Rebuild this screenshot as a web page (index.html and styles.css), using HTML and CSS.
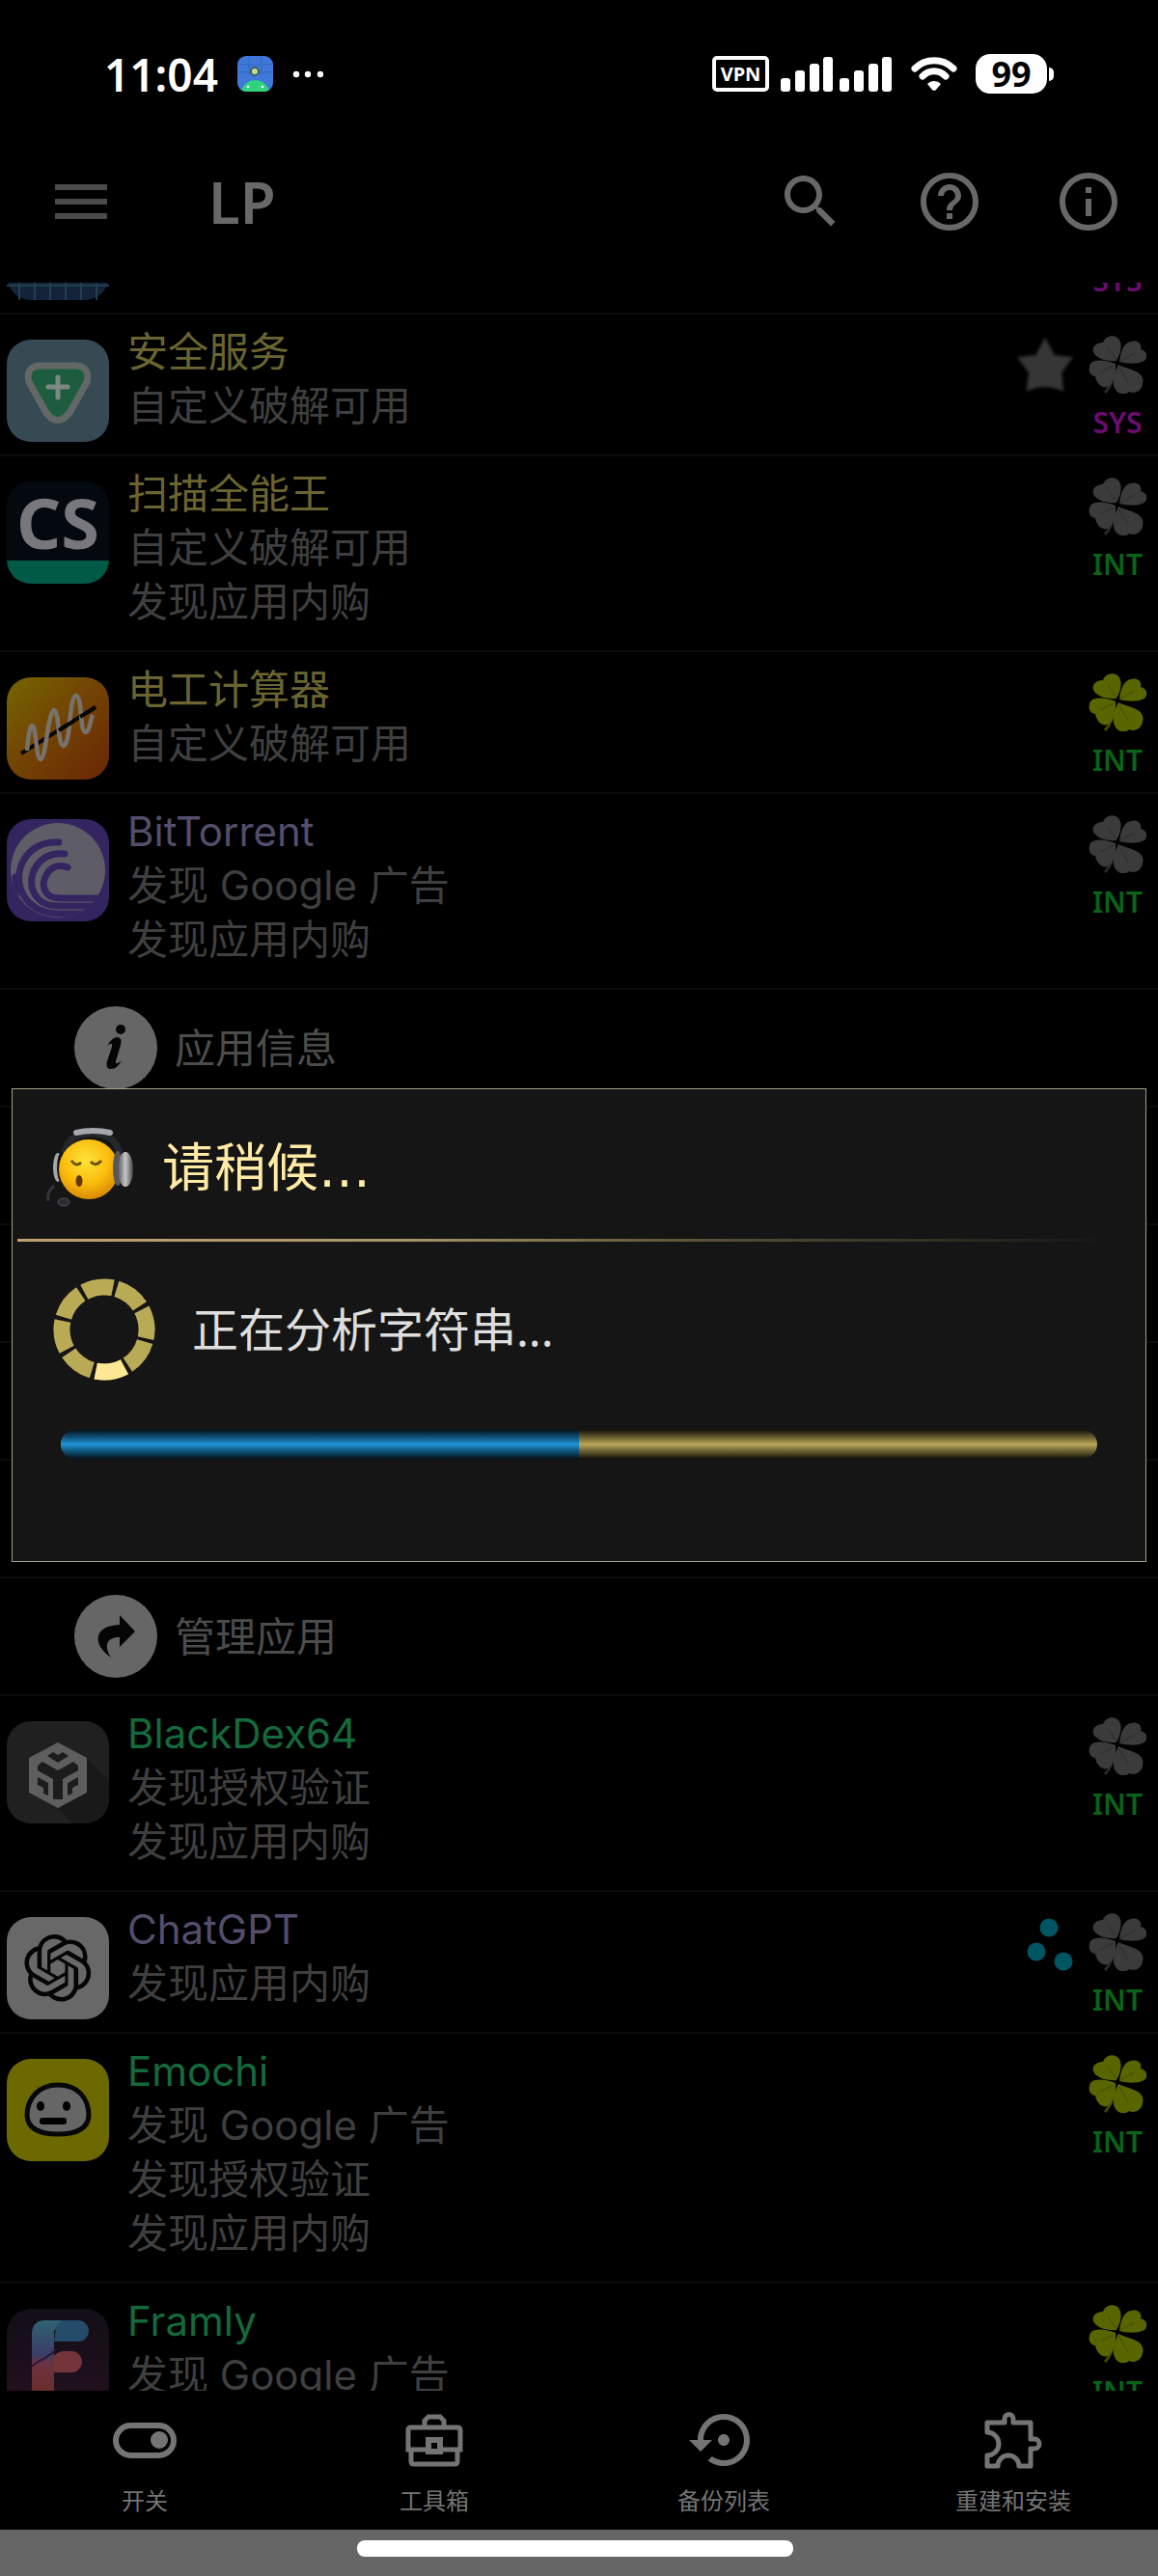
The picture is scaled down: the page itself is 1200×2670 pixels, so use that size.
FILE: index.html
```html
<!DOCTYPE html>
<html lang="zh-CN">
<head>
<meta charset="utf-8">
<meta name="viewport" content="width=device-width, initial-scale=1">
<title>LP</title>
<link rel="stylesheet" href="styles.css">
</head>
<body>
<svg class="defs" aria-hidden="true">
  <symbol id="clover" viewBox="0 0 60 60">
    <path d="M26 34C26 45 22 54 17 59" fill="none" stroke="currentColor" stroke-width="3" opacity=".7"/>
    <g fill="currentColor">
      <path d="M29 26C20 27 8 24 5 17C3 10 10 7 15 7C17 0 27-2 31 3C36 9 33 19 29 26Z"/>
      <path d="M32 27C33 18 36 7 44 6C50 4 56 8 54 14C61 16 62 22 58 26C50 30 40 29 32 27Z"/>
      <path d="M28 29C18 25 6 24 2 29C-1 35 1 41 7 42C8 49 14 55 20 53C26 49 29 39 28 29Z"/>
      <path d="M31 30C27 38 24 48 27 54C30 61 38 62 42 58C48 61 55 57 56 50C58 44 54 39 49 37C43 34 37 33 31 30Z"/>
    </g>
    <path d="M29 25L20 12M33 26L48 18M26 31L12 38M32 33L41 49" fill="none" stroke="#000" stroke-opacity=".12" stroke-width="2"/>
  </symbol>
</svg>
<div class="screen">
  <header class="status">
    <span class="clock">11:04</span>
    <svg class="notice" width="37" height="37" viewBox="0 0 37 37"><defs><clipPath id="nc"><rect width="37" height="37" rx="9"/></clipPath></defs><g clip-path="url(#nc)"><rect width="37" height="37" fill="#3f78d8"/><path d="M0 9H37M0 17H37M12 0V20M25 0V20" stroke="#3569c0"/><circle cx="18" cy="16" r="5" fill="#3b5f6c"/><circle cx="18" cy="16" r="3" fill="#c9dc8b"/><path d="M3 40C6 20 31 20 34 40Z" fill="#31d27e"/><circle cx="11" cy="32" r="1.300" fill="#fff"/><circle cx="26" cy="32" r="1.300" fill="#fff"/></g></svg>
    <svg class="more" width="32" height="8" viewBox="0 0 32 8" fill="#fff"><circle cx="4" cy="4" r="3.200"/><circle cx="16" cy="4" r="3.200"/><circle cx="29" cy="4" r="3.200"/></svg>
    <span class="vpn">VPN</span>
    <svg width="115" height="37" viewBox="0 0 115 37" fill="#fff"><rect y="23" width="10" height="14" rx="3"/><rect x="15" y="15" width="10" height="22" rx="3"/><rect x="30" y="8" width="10" height="29" rx="3"/><rect x="44" y="1" width="10" height="36" rx="3"/><rect x="61" y="23" width="10" height="14" rx="3"/><rect x="76" y="15" width="10" height="22" rx="3"/><rect x="91" y="8" width="10" height="29" rx="3"/><rect x="105" y="1" width="10" height="36" rx="3"/></svg>
    <svg class="wifi" width="48" height="37" viewBox="0 0 48 37"><path d="M4 13C15 2 33 2 44 13M12 21C19 14 29 14 36 21" fill="none" stroke="#fff" stroke-width="7" stroke-linecap="round"/><path d="M17 29C21 25 27 25 31 29L26 35Q24 37 22 35Z" fill="#fff"/></svg>
    <span class="battery">99</span><span class="nub"></span>
  </header>

  <div class="appbar">
    <button class="icon-btn dimmer" aria-label="菜单"><svg viewBox="0 0 24 24"><path d="M3 18h18v-2H3v2zm0-5h18v-2H3v2zm0-7v2h18V6H3z"/></svg></button>
    <h1>LP</h1>
    <div class="actions">
      <button class="icon-btn" aria-label="搜索"><svg viewBox="0 0 24 24"><path d="M15.500 14h-.79l-.28-.27C15.410 12.590 16 11.110 16 9.500 16 5.910 13.090 3 9.500 3S3 5.910 3 9.500 5.910 16 9.500 16c1.610 0 3.090-.59 4.230-1.570l.27.28v.79l5 4.990L20.490 19l-4.990-5zm-6 0C7.010 14 5 11.990 5 9.500S7.010 5 9.500 5 14 7.010 14 9.500 11.990 14 9.500 14z"/></svg></button>
      <button class="icon-btn" aria-label="帮助"><svg viewBox="0 0 24 24"><path d="M11 18h2v-2h-2v2zm1-16C6.480 2 2 6.480 2 12s4.480 10 10 10 10-4.480 10-10S17.520 2 12 2zm0 18c-4.410 0-8-3.590-8-8s3.590-8 8-8 8 3.590 8 8-3.590 8-8 8zm0-14c-2.210 0-4 1.790-4 4h2c0-1.100.9-2 2-2s2 .9 2 2c0 2-3 1.750-3 5h2c0-2.250 3-2.500 3-5 0-2.210-1.790-4-4-4z"/></svg></button>
      <button class="icon-btn" aria-label="关于"><svg viewBox="0 0 24 24"><path d="M11 7h2v2h-2zm0 4h2v6h-2zm1-9C6.480 2 2 6.480 2 12s4.480 10 10 10 10-4.480 10-10S17.520 2 12 2zm0 18c-4.410 0-8-3.590-8-8s3.590-8 8-8 8 3.590 8 8-3.590 8-8 8z"/></svg></button>
    </div>
  </div>

  <main class="list-view">
    <ul class="apps">
      <li class="app scrolled">
        <svg class="logo" viewBox="0 0 106 106"><rect width="106" height="106" rx="25" fill="#12233a"/><path d="M0 91H106M13 0V106M29 0V106M45 0V106M61 0V106M77 0V106M93 0V106" stroke="#223f50" stroke-width="2"/></svg>
        <div class="info"></div>
        <div class="side"><svg class="mark"></svg><span class="tag sys">SYS</span></div>
      </li>
      <li class="app">
        <svg class="logo" viewBox="0 0 106 106"><rect width="106" height="106" rx="25" fill="#364a54"/><path d="M35 27H71Q87 28 83 44L65 76Q53 91 41 76L23 44Q19 28 35 27Z" fill="#1e5c40" stroke="#626866" stroke-width="7"/><path d="M53 39V60M43 49H63" stroke="#7c8882" stroke-width="5" stroke-linecap="round"/></svg>
        <div class="info"><h2 class="yellow">安全服务</h2><p>自定义破解可用</p></div>
        <svg class="mark star" viewBox="0 0 60 60"><path d="M31 4L40 21L58 23L47 38L49 56Q31 48 13 56L15 38L4 23L22 21Z" fill="#363636" stroke="#1d1d1d" stroke-width="4" stroke-linejoin="round" paint-order="stroke"/></svg>
        <div class="side"><svg class="mark grey"><use href="#clover"/></svg><span class="tag sys">SYS</span></div>
      </li>
      <li class="app">
        <svg class="logo" viewBox="0 0 106 106"><defs><clipPath id="cs"><rect width="106" height="106" rx="25"/></clipPath></defs><g clip-path="url(#cs)"><rect width="106" height="106" fill="#040910"/><rect y="82" width="106" height="24" fill="#005a46"/></g><text x="53" y="70" text-anchor="middle" class="logo-text">CS</text></svg>
        <div class="info"><h2 class="yellow">扫描全能王</h2><p>自定义破解可用</p><p>发现应用内购</p></div>
        <div class="side"><svg class="mark grey"><use href="#clover"/></svg><span class="tag">INT</span></div>
      </li>
      <li class="app">
        <svg class="logo" viewBox="0 0 106 106"><defs><linearGradient id="og" x1="0" y1="0" x2="1" y2="1"><stop stop-color="#746600"/><stop offset=".5" stop-color="#724204"/><stop offset="1" stop-color="#6a2605"/></linearGradient></defs><rect width="106" height="106" rx="25" fill="url(#og)"/><path d="M15 79L92 31" stroke="#080604" stroke-width="4"/><path d="M21 76C23 54 25 46 28 52C31 64 31 84 35 85C41 84 42 38 49 34C55 36 52 70 59 71C67 68 64 19 72 19C79 22 75 57 82 57C86 56 86 46 89 39" fill="none" stroke="#77736c" stroke-width="4.500"/><path d="M54 55L70 45M76 41L92 31" stroke="#080604" stroke-width="4"/></svg>
        <div class="info"><h2 class="yellow">电工计算器</h2><p>自定义破解可用</p></div>
        <div class="side"><svg class="mark lime"><use href="#clover"/></svg><span class="tag">INT</span></div>
      </li>
      <li class="app">
        <svg class="logo" viewBox="0 0 106 106"><defs><clipPath id="bt"><circle cx="53" cy="53" r="49"/></clipPath></defs><rect width="106" height="106" rx="25" fill="#342560"/><circle cx="53" cy="53" r="49" fill="#5e5c66"/><g clip-path="url(#bt)" fill="none" stroke="#342560" stroke-width="7" stroke-linecap="round"><path d="M54 24C24 22 8 48 14 71C20 91 38 98 55 98H90"/><path d="M60 36C32 33 20 60 28 76C34 88 44 90 54 90H104"/><path d="M63 50C44 43 34 64 40 75C44 81 49 82 56 82H104"/><path d="M9 60V90"/></g></svg>
        <div class="info"><h2 class="violet">BitTorrent</h2><p>发现 Google 广告</p><p>发现应用内购</p></div>
        <div class="side"><svg class="mark grey"><use href="#clover"/></svg><span class="tag">INT</span></div>
      </li>
      <li class="option">
        <svg viewBox="0 0 86 86"><circle cx="43" cy="43" r="43" fill="#666"/><ellipse cx="48" cy="24" rx="5" ry="5" fill="#050505"/><path d="M34 41Q39 32 45 32Q50 33 48 40L43 57Q42 62 49 56Q44 66 37 65Q32 64 34 57L39 42Q40 36 34 41Z" fill="#050505"/></svg><span>应用信息</span>
      </li>
      <li class="option"></li>
      <li class="option"></li>
      <li class="option"></li>
      <li class="option"></li>
      <li class="option">
        <svg viewBox="0 0 86 86"><circle cx="43" cy="43" r="43" fill="#666"/><path d="M47 21L63 38L47 54V44C34 44 30 52 38 65C18 51 20 32 47 31Z" fill="#050505"/></svg><span>管理应用</span>
      </li>
      <li class="app">
        <svg class="logo" viewBox="0 0 106 106"><rect width="106" height="106" rx="25" fill="#202020"/><path d="M53 90L83 38L106 62V81Q103 103 81 106H68Z" fill="#191919"/><path d="M53 22L83 38V74L53 90L23 74V38Z" fill="#5e5e5e"/><g fill="#1c1c1c"><path d="M42 36L48 32L53 35L58 32L64 36L53 43Z"/><path d="M32 46L37 42L53 51L69 42L74 46V51L58 60V81H48V60L32 51Z"/><path d="M32 58L43 64V77L38 75V69L32 66ZM74 58L63 64V77L68 75V69L74 66Z"/></g></svg>
        <div class="info"><h2 class="green">BlackDex64</h2><p>发现授权验证</p><p>发现应用内购</p></div>
        <div class="side"><svg class="mark grey"><use href="#clover"/></svg><span class="tag">INT</span></div>
      </li>
      <li class="app">
        <svg class="logo" viewBox="0 0 106 106"><rect width="106" height="106" rx="25" fill="#686868"/><g transform="translate(18 18) scale(2.900)"><path fill="#050505" d="M22.2819 9.8211a5.9847 5.9847 0 0 0-.5157-4.9108 6.0462 6.0462 0 0 0-6.5098-2.9A6.0651 6.0651 0 0 0 4.9807 4.1818a5.9847 5.9847 0 0 0-3.9977 2.9 6.0462 6.0462 0 0 0 .7427 7.0966 5.98 5.98 0 0 0 .511 4.9107 6.051 6.051 0 0 0 6.5146 2.9001A5.9847 5.9847 0 0 0 13.2599 24a6.0557 6.0557 0 0 0 5.7718-4.2058 5.9894 5.9894 0 0 0 3.9977-2.9001 6.0557 6.0557 0 0 0-.7475-7.0729zm-9.022 12.6081a4.4755 4.4755 0 0 1-2.8764-1.0408l.1419-.0804 4.7783-2.7582a.7948.7948 0 0 0 .3927-.6813v-6.7369l2.02 1.1686a.071.071 0 0 1 .038.052v5.5826a4.504 4.504 0 0 1-4.4945 4.4944zm-9.6607-4.1254a4.4708 4.4708 0 0 1-.5346-3.0137l.142.0852 4.783 2.7582a.7712.7712 0 0 0 .7806 0l5.8428-3.3685v2.3324a.0804.0804 0 0 1-.0332.0615L9.74 19.9502a4.4992 4.4992 0 0 1-6.1408-1.6464zM2.3408 7.8956a4.485 4.485 0 0 1 2.3655-1.9728V11.6a.7664.7664 0 0 0 .3879.6765l5.8144 3.3543-2.0201 1.1685a.0757.0757 0 0 1-.071 0l-4.8303-2.7865A4.504 4.504 0 0 1 2.3408 7.872zm16.5963 3.8558L13.1038 8.364 15.1192 7.2a.0757.0757 0 0 1 .071 0l4.8303 2.7913a4.4944 4.4944 0 0 1-.6765 8.1042v-5.6772a.79.79 0 0 0-.407-.667zm2.0107-3.0231l-.142-.0852-4.7735-2.7818a.7759.7759 0 0 0-.7854 0L9.409 9.2297V6.8974a.0662.0662 0 0 1 .0284-.0615l4.8303-2.7866a4.4992 4.4992 0 0 1 6.6802 4.66zM8.3065 12.863l-2.02-1.1638a.0804.0804 0 0 1-.038-.0567V6.0742a4.4992 4.4992 0 0 1 7.3757-3.4537l-.142.0805L8.704 5.459a.7948.7948 0 0 0-.3927.6813zm1.0976-2.3654l2.602-1.4998 2.6069 1.4998v2.9994l-2.5974 1.4997-2.6067-1.4997Z"/></g></svg>
        <div class="info"><h2 class="violet">ChatGPT</h2><p>发现应用内购</p></div>
        <svg class="mark" viewBox="0 0 60 60" fill="#005563"><circle cx="35" cy="15" r="9.500"/><circle cx="22" cy="40" r="9.500"/><circle cx="50" cy="50" r="9.500"/></svg>
        <div class="side"><svg class="mark grey"><use href="#clover"/></svg><span class="tag">INT</span></div>
      </li>
      <li class="app">
        <svg class="logo" viewBox="0 0 106 106"><rect width="106" height="106" rx="25" fill="#6c6900"/><path d="M53 27C73 27 85 40 85 59C84 73 71 78 53 78S22 73 21 59C21 40 34 27 53 27Z" fill="#666" stroke="#070707" stroke-width="5"/><ellipse cx="35" cy="49" rx="4" ry="5"/><ellipse cx="62" cy="49" rx="4" ry="5"/><rect x="34" y="61" width="28" height="7" rx="3"/></svg>
        <div class="info"><h2 class="green">Emochi</h2><p>发现 Google 广告</p><p>发现授权验证</p><p>发现应用内购</p></div>
        <div class="side"><svg class="mark lime"><use href="#clover"/></svg><span class="tag">INT</span></div>
      </li>
      <li class="app">
        <svg class="logo" viewBox="0 0 106 106"><defs><linearGradient id="fb" x1="0" y1="0" x2="0" y2="1"><stop stop-color="#120e18"/><stop offset="1" stop-color="#25101f"/></linearGradient><linearGradient id="fs" x1="0" y1="0" x2="0" y2="1"><stop stop-color="#2e6274"/><stop offset=".45" stop-color="#3d3c68"/><stop offset=".55" stop-color="#6a3341"/><stop offset="1" stop-color="#6a2c25"/></linearGradient></defs><rect width="106" height="106" rx="25" fill="url(#fb)"/><path d="M26 92V25Q27 12 40 12H58L49 23V92Z" fill="url(#fs)"/><path d="M58 12H74A11 11 0 0 1 74 34H49C51 28 48 18 58 12Z" fill="#244b68"/><path d="M60 44H67A11 11 0 0 1 67 66H49V49Q53 44 60 44Z" fill="#74353a"/><path d="M26 60C34 52 44 51 51 42" fill="none" stroke="#2a1638" stroke-width="2"/></svg>
        <div class="info"><h2 class="green">Framly</h2><p>发现 Google 广告</p></div>
        <div class="side"><svg class="mark lime"><use href="#clover"/></svg><span class="tag">INT</span></div>
      </li>
    </ul>
  </main>

  <nav class="tabs">
    <button><svg viewBox="0 0 72 72"><rect x="6" y="21" width="60" height="31" rx="15.500" fill="none" stroke="currentColor" stroke-width="6"/><circle cx="51" cy="36" r="9" fill="currentColor"/></svg><span>开关</span></button>
    <button><svg viewBox="0 0 72 72" fill="none" stroke="currentColor" stroke-width="5"><path d="M26 23V16L30 12H42L46 16V23M9 46V26Q9 23 12 23H60Q63 23 63 26V46ZM12 46V58Q12 61 15 61H57Q60 61 60 58V46"/><rect x="30" y="36" width="12" height="12" stroke-width="6" fill="#000"/></svg><span>工具箱</span></button>
    <button><svg viewBox="0 0 24 24" fill="currentColor"><path d="M14 12c0-1.100-.9-2-2-2s-2 .9-2 2 .9 2 2 2 2-.9 2-2zm-2-9c-4.970 0-9 4.030-9 9H0l4 4 4-4H5c0-3.870 3.130-7 7-7s7 3.130 7 7-3.130 7-7 7c-1.510 0-2.910-.49-4.060-1.300l-1.420 1.440C8.040 20.300 9.940 21 12 21c4.970 0 9-4.030 9-9s-4.030-9-9-9z"/></svg><span>备份列表</span></button>
    <button><svg viewBox="0 0 72 72" fill="none" stroke="currentColor" stroke-width="5" stroke-linejoin="round"><path d="M9 18H27V14A4.500 4.500 0 0 1 36 14V18H54V35H58A4.500 4.500 0 0 1 58 45H54V63H42A11 11 0 0 0 20 63H9V52A12 12 0 0 0 9 28Z"/></svg><span>重建和安装</span></button>
  </nav>
  <footer class="gesture"><span></span></footer>

  <div class="overlay">
    <section class="dialog" role="dialog" aria-labelledby="dlg-title">
      <div class="dialog-head">
        <svg class="emoji" viewBox="0 0 90 84"><defs><radialGradient id="yf" cx=".45" cy=".35" r=".65"><stop stop-color="#ffe23a"/><stop offset=".6" stop-color="#fbbd0c"/><stop offset="1" stop-color="#d98a06"/></radialGradient><linearGradient id="mt"><stop stop-color="#555"/><stop offset=".5" stop-color="#c8c8cc"/><stop offset="1" stop-color="#444"/></linearGradient></defs><path d="M18 38C17 12 31 6 48 6C65 6 77 14 77 38" fill="none" stroke="#26272b" stroke-width="7"/><path d="M31 5Q48 1 66 5" fill="none" stroke="#a6a6ae" stroke-width="6" stroke-linecap="round"/><ellipse cx="12" cy="41" rx="5" ry="15" fill="#a4a6ac"/><ellipse cx="16" cy="41" rx="5" ry="16" fill="#15161a"/><path d="M8 60Q0 67 2 76" fill="none" stroke="#34343a" stroke-width="3"/><ellipse cx="18" cy="77" rx="6" ry="4" fill="#2b2b31" stroke="#55555c"/><circle cx="44" cy="43" r="31" fill="url(#yf)"/><ellipse cx="74" cy="42" rx="5" ry="18" fill="#56575c"/><ellipse cx="82" cy="43" rx="8" ry="18" fill="url(#mt)"/><path d="M26 34Q31 41 36 36M46 35Q51 41 57 34" fill="none" stroke="#6b5410" stroke-width="3"/><ellipse cx="34" cy="55" rx="3.500" ry="6" fill="#633606"/></svg>
        <h2 id="dlg-title">请稍候<span class="dots">…</span></h2>
      </div>
      <div class="rule"></div>
      <div class="dialog-body">
        <div class="task">
          <svg class="spinner" viewBox="0 0 106 106" fill="none" stroke-width="17"><circle cx="53" cy="53" r="44" stroke="#b9aa56" stroke-dasharray="30.550 4" transform="rotate(16.600 53 53)"/><circle cx="53" cy="53" r="44" stroke="#ffe893" stroke-dasharray="30.550 300" transform="rotate(61.600 53 53)"/></svg>
          <label for="bar">正在分析字符串...</label>
        </div>
        <progress id="bar" max="100" value="50"></progress>
      </div>
    </section>
  </div>
</div>
</body>
</html>
```
FILE: styles.css
```css
* { box-sizing: border-box; }

body {
  margin: 0;
  background: #000;
  font-family: "Noto Sans", "Noto Sans CJK SC", sans-serif;
}

h1, h2, p, ul { margin: 0; padding: 0; font-weight: 400; }
button { border: 0; padding: 0; background: none; font: inherit; color: inherit; }
svg { display: block; flex: none; }
.defs { position: absolute; width: 0; height: 0; }

.screen {
  position: relative;
  display: flex;
  flex-direction: column;
  height: 100vh;
  overflow: hidden;
}

/* status bar */
.status {
  flex: none;
  display: flex;
  align-items: center;
  padding: 28px 108px 0 108px;
  height: 125px;
  color: #fff;
}
.clock { font-size: 46px; line-height: 56px; font-weight: 600; }
.notice { margin-left: 20px; }
.more { margin: 0 auto 0 20px; }
.vpn {
  display: grid;
  place-items: center;
  width: 59px;
  height: 37px;
  margin-right: 12px;
  border: 4px solid #fff;
  border-radius: 5px;
  font-size: 20px;
  line-height: 28px;
  font-weight: 700;
}
.wifi { margin: 0 19px 0 20px; }
.battery {
  display: grid;
  place-items: center;
  width: 74px;
  height: 41px;
  border-radius: 15px;
  background: #fff;
  color: #000;
  font-size: 36px;
  line-height: 40px;
  font-weight: 700;
}
.nub {
  width: 5px;
  height: 14px;
  margin-left: 2px;
  border-radius: 0 6px 6px 0;
  background: #fff;
}

/* title bar */
.appbar {
  flex: none;
  display: flex;
  align-items: center;
  gap: 96px;
  height: 168px;
  padding: 0 36px 0 48px;
  color: #686868;
}
.appbar h1 { font-size: 60px; line-height: 72px; font-weight: 600; }
.actions { display: flex; gap: 72px; margin-left: auto; }
.icon-btn svg { width: 72px; height: 72px; fill: currentColor; }
.dimmer { color: #4a4a4a; }

/* application list */
.list-view { flex: 1; min-height: 0; overflow: hidden; }
.apps { list-style: none; }
.app {
  display: flex;
  align-items: flex-start;
  gap: 16px;
  min-height: 147px;
  padding: 11px 12px 0 7px;
  border-bottom: 2px solid #0b0b0b;
}
.scrolled { margin-top: -114px; }
.logo { width: 106px; height: 106px; margin-top: 15px; }
.logo-text { font: 700 72px "Noto Sans", sans-serif; fill: #77777c; }
.info {
  flex: 1;
  padding: 0 0 22px 3px;
  font-family: Inter, "Noto Sans CJK SC", sans-serif;
  font-size: 42px;
  line-height: 56px;
  color: #3f3f3f;
}
.info h2 { font-size: 42px; }
.yellow { color: #6a6530; }
.violet { color: #544d6c; }
.green { color: #146a3c; }
.mark { width: 60px; height: 60px; margin-top: 11px; }
.star { filter: blur(1px); }
.grey { color: #3b3b3b; }
.lime { color: #596600; }
.side { display: flex; flex-direction: column; align-items: center; width: 60px; }
.tag {
  margin-top: 10px;
  font-size: 30px;
  line-height: 40px;
  font-weight: 600;
  color: #0b6318;
}
.sys { color: #6c0c70; }

.option {
  display: flex;
  align-items: center;
  gap: 18px;
  height: 122px;
  padding-left: 77px;
  border-bottom: 2px solid #0b0b0b;
  font-size: 42px;
  line-height: 56px;
  color: #4c4c4c;
}
.option svg { width: 86px; height: 86px; }

/* bottom tabs */
.tabs {
  flex: none;
  display: grid;
  grid-template-columns: repeat(4, 1fr);
  height: 144px;
  color: #747474;
}
.tabs button {
  display: flex;
  flex-direction: column;
  align-items: center;
  gap: 11px;
  padding-top: 15px;
  font-size: 24px;
  line-height: 32px;
}
.tabs svg { width: 72px; height: 72px; }
.gesture {
  flex: none;
  display: flex;
  justify-content: center;
  height: 48px;
  padding: 11px 8px 0 0;
  background: #666;
}
.gesture span { width: 38%; height: 17px; border-radius: 8px; background: #fff; }

/* progress dialog */
.overlay {
  position: absolute;
  inset: 77px 0 0;
  display: flex;
  align-items: center;
  padding: 0 12px;
}
.dialog { flex: 1; border: 1px solid #a69f86; background: #151515; }
.dialog-head {
  display: flex;
  align-items: center;
  gap: 30px;
  height: 155px;
  padding: 8px 35px 0 35px;
}
.emoji { width: 90px; height: 84px; }
.dialog h2 { font-size: 54px; line-height: 80px; color: #ffeaa6; }
.dots { font-family: "DejaVu Sans", sans-serif; }
.rule {
  height: 3px;
  margin: 0 36px 0 5px;
  background: linear-gradient(90deg, #c0a070, #a99669 35%, #5e573a 60%, #151515);
}
.dialog-body { padding: 38px 50px 106px; }
.task { display: flex; align-items: center; gap: 38px; padding-bottom: 51px; }
.spinner { width: 106px; height: 106px; margin-left: -8px; }
.task label { font-size: 48px; line-height: 64px; color: #dedede; }
progress {
  appearance: none;
  display: block;
  width: 100%;
  height: 30px;
  border: 0;
  border-radius: 15px;
  overflow: hidden;
  background: none;
}
progress::-webkit-progress-bar {
  background: linear-gradient(#151408, #6e6435 28%, #baa757 50%, #6e6435 72%, #151408);
}
progress::-webkit-progress-value {
  background: linear-gradient(#04131c, #0f5780 28%, #1f95d6 50%, #0f5780 72%, #04131c);
}
```
